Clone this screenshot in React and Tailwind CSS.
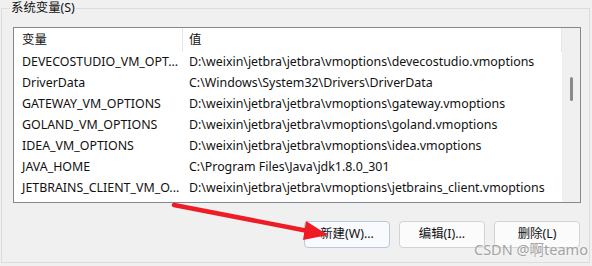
import React from "react";

const rows = [
  ["DEVECOSTUDIO_VM_OPT...", "D:\\weixin\\jetbra\\jetbra\\vmoptions\\devecostudio.vmoptions"],
  ["DriverData", "C:\\Windows\\System32\\Drivers\\DriverData"],
  ["GATEWAY_VM_OPTIONS", "D:\\weixin\\jetbra\\jetbra\\vmoptions\\gateway.vmoptions"],
  ["GOLAND_VM_OPTIONS", "D:\\weixin\\jetbra\\jetbra\\vmoptions\\goland.vmoptions"],
  ["IDEA_VM_OPTIONS", "D:\\weixin\\jetbra\\jetbra\\vmoptions\\idea.vmoptions"],
  ["JAVA_HOME", "C:\\Program Files\\Java\\jdk1.8.0_301"],
  ["JETBRAINS_CLIENT_VM_O...", "D:\\weixin\\jetbra\\jetbra\\vmoptions\\jetbrains_client.vmoptions"],
];

export default function App() {
  return (
    <div
      className="relative w-[592px] h-[266px] bg-[#f0f0f0] overflow-hidden text-[12.4px] text-[#111]"
      style={{ fontFamily: '"Noto Sans", "Noto Sans CJK SC", sans-serif' }}
    >
      <div className="pt-[8px] pl-[1px]">
        <div className="relative w-[589px] h-[255px] border border-[#dcdcdc] pt-[18px] pl-[11px] flex flex-col">
          <div className="absolute left-[8px] top-[-9px] px-[1px] bg-[#f0f0f0] leading-[16px] text-[12.4px]">
            系统变量(S)
          </div>
          <div className="w-[568px] h-[176px] border border-[#828790] bg-white flex">
            <div className="flex-1 flex flex-col">
              <div className="h-[24px] flex items-center">
                <div className="w-[169px] h-full flex items-center pl-[8px] border-r border-[#e5e5e5]">变量</div>
                <div className="flex-1 h-full flex items-center pl-[6px] border-r border-[#e5e5e5]">值</div>
              </div>
              {rows.map(([k, v]) => (
                <div key={k} className="h-[21px] flex items-center whitespace-nowrap">
                  <div className="w-[169px] pl-[8px]">{k}</div>
                  <div className="flex-1 pl-[6px]">{v}</div>
                </div>
              ))}
            </div>
            <div className="w-[18px] bg-[#f0f0f0] flex justify-center pt-[49px]">
              <div className="w-[3px] h-[24px] rounded-full bg-[#8a8a8a]" />
            </div>
          </div>
          <div className="flex justify-end gap-[9px] pr-[9px] mt-[18px]">
            <button className="w-[86px] h-[27px] rounded-[4px] border border-[#b9c7d9] bg-[#f8fafd] text-[12.4px]">
              新建(W)...
            </button>
            <button className="w-[86px] h-[27px] rounded-[4px] border border-[#d3d3d3] bg-[#fbfbfb] text-[12.4px]">
              编辑(I)...
            </button>
            <button className="w-[86px] h-[27px] rounded-[4px] border border-[#d3d3d3] bg-[#fbfbfb] text-[12.4px]">
              删除(L)
            </button>
          </div>
        </div>
      </div>
      <svg className="absolute left-0 top-0 pointer-events-none" width="592" height="266">
        <line x1="174" y1="205" x2="308" y2="231" stroke="#ee1c25" strokeWidth="4.5" strokeLinecap="round" />
        <polygon points="328,235 306,221 303,240" fill="#ee1c25" />
      </svg>
      <div
        className="absolute left-[474px] top-[240px] text-[14.5px] leading-[18px] text-[#a3a3a3] whitespace-nowrap"
        style={{ textShadow: "0 0 2px #fff" }}
      >
        CSDN @啊teamo
      </div>
    </div>
  );
}
